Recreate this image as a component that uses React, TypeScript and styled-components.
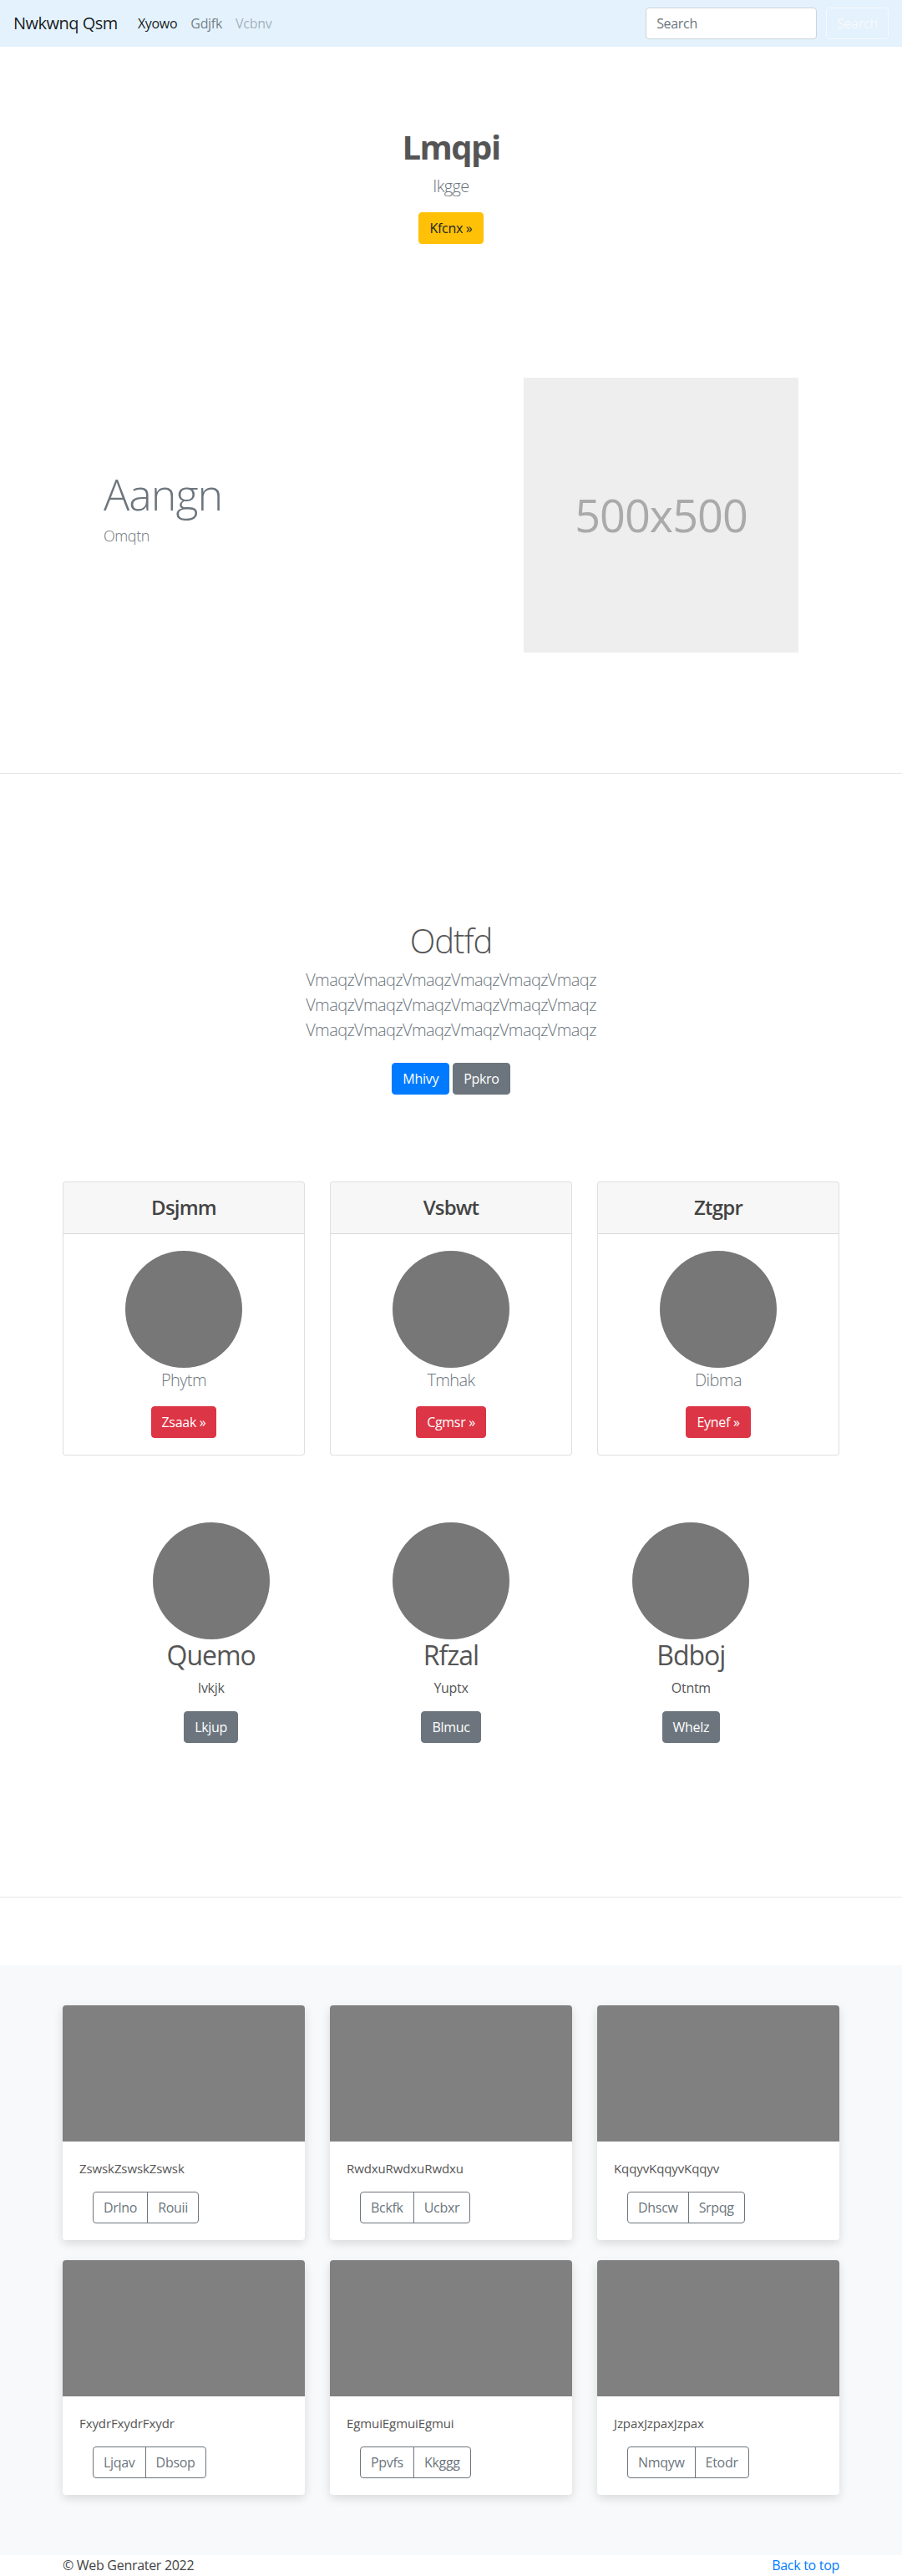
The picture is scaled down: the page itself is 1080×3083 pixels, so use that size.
import React from "react";
import styled, { createGlobalStyle, css } from "styled-components";

const GlobalStyle = createGlobalStyle`
  *, *::before, *::after { box-sizing: border-box; }
  html, body { margin: 0; padding: 0; }
  body {
    font-family: "Open Sans", "Noto Sans", "Liberation Sans", sans-serif;
    font-size: 16px;
    line-height: 1.5;
    letter-spacing: -0.3px;
    color: #555555;
    background: #ffffff;
  }
  h1, h2, h3, h4, p { margin: 0; }
`;

type Variant =
  | "warning"
  | "primary"
  | "secondary"
  | "danger"
  | "outlineSecondary"
  | "outlineLight";

const variants: Record<Variant, ReturnType<typeof css>> = {
  warning: css`background: #ffc107; border-color: #ffc107; color: #212529;`,
  primary: css`background: #007bff; border-color: #007bff; color: #ffffff;`,
  secondary: css`background: #6c757d; border-color: #6c757d; color: #ffffff;`,
  danger: css`background: #dc3545; border-color: #dc3545; color: #ffffff;`,
  outlineSecondary: css`background: transparent; border-color: #6c757d; color: #6c757d;`,
  outlineLight: css`background: transparent; border-color: #f8f9fa; color: #f8f9fa;`,
};

const Button = styled.button<{ $variant: Variant }>`
  display: inline-flex;
  align-items: center;
  justify-content: center;
  height: 38px;
  padding: 0 12px;
  font-family: inherit;
  font-size: 16px;
  font-weight: 400;
  line-height: 1.5;
  letter-spacing: -0.3px;
  border: 1px solid transparent;
  border-radius: 4px;
  cursor: pointer;
  white-space: nowrap;
  ${(p) => variants[p.$variant]}
`;

/* ---------- Navbar ---------- */
const Navbar = styled.nav`
  height: 56px;
  padding: 0 16px;
  display: flex;
  align-items: center;
  background: #e3f2fd;
`;

const Brand = styled.a`
  font-size: 20px;
  line-height: 30px;
  letter-spacing: -0.5px;
  color: rgba(0, 0, 0, 0.9);
  margin-right: 16px;
  text-decoration: none;
`;

const NavList = styled.div`
  display: flex;
  align-items: center;
  flex: 1;
`;

const NavLink = styled.a<{ $state: "active" | "normal" | "disabled" }>`
  padding: 0 8px;
  font-size: 16px;
  line-height: 24px;
  text-decoration: none;
  color: ${(p) =>
    p.$state === "active"
      ? "rgba(0,0,0,0.9)"
      : p.$state === "normal"
      ? "rgba(0,0,0,0.5)"
      : "rgba(0,0,0,0.3)"};
`;

const SearchForm = styled.form`
  display: flex;
  align-items: center;
  gap: 11px;
`;

const SearchInput = styled.input`
  width: 205px;
  height: 38px;
  padding: 6px 12px;
  font-family: inherit;
  font-size: 16px;
  letter-spacing: -0.3px;
  color: #495057;
  background: #ffffff;
  border: 1px solid #ced4da;
  border-radius: 4px;
  outline: none;
  &::placeholder { color: #6c757d; }
`;

/* ---------- Hero ---------- */
const Hero = styled.section`
  padding-top: 96px;
  display: flex;
  flex-direction: column;
  align-items: center;
  text-align: center;
`;

const HeroTitle = styled.h1`
  font-size: 40px;
  line-height: 48px;
  font-weight: 700;
  letter-spacing: -1.5px;
  color: #555555;
  margin-bottom: 8px;
`;

const Lead = styled.p<{ $mb?: number }>`
  font-size: 20px;
  line-height: 30px;
  font-weight: 300;
  letter-spacing: -0.6px;
  color: #6c757d;
  margin-bottom: ${(p) => (p.$mb ?? 16)}px;
`;

/* ---------- Feature ---------- */
const Feature = styled.section`
  padding: 160px 0 144px;
`;

const FeatureInner = styled.div`
  width: 832px;
  margin: 0 auto;
  display: flex;
  align-items: center;
  justify-content: space-between;
`;

const FeatureText = styled.div`
  display: flex;
  flex-direction: column;
`;

const Display = styled.h1`
  font-size: 52px;
  line-height: 64px;
  font-weight: 300;
  letter-spacing: -1px;
  color: #6c757d;
  margin-bottom: 6px;
`;

const FeatureSub = styled.p`
  font-size: 18px;
  line-height: 24px;
  font-weight: 300;
  letter-spacing: -0.4px;
  color: #6c757d;
  margin-bottom: 22px;
`;

const Placeholder = styled.div`
  width: 329px;
  height: 329px;
  background: #eeeeee;
  color: #aaaaaa;
  font-size: 54px;
  letter-spacing: -1px;
  display: flex;
  align-items: center;
  justify-content: center;
`;

const Divider = styled.hr`
  margin: 0;
  border: 0;
  border-top: 1px solid rgba(0, 0, 0, 0.1);
`;

/* ---------- Album jumbotron ---------- */
const Jumbo = styled.section`
  padding-top: 176px;
  display: flex;
  flex-direction: column;
  align-items: center;
  text-align: center;
`;

const JumboTitle = styled.h1`
  font-size: 40px;
  line-height: 48px;
  font-weight: 300;
  letter-spacing: -1px;
  color: #555555;
  margin-bottom: 8px;
`;

const ButtonRow = styled.div`
  display: flex;
  justify-content: center;
  gap: 4px;
  margin-top: 8px;
`;

/* ---------- Pricing cards ---------- */
const Container = styled.div`
  width: 960px;
  margin: 0 auto;
  padding: 0 15px;
`;

const PricingGrid = styled.div`
  margin-top: 104px;
  display: grid;
  grid-template-columns: repeat(3, 1fr);
  column-gap: 30px;
`;

const PricingCard = styled.div`
  border: 1px solid rgba(0, 0, 0, 0.125);
  border-radius: 4px;
  overflow: hidden;
  background: #ffffff;
  display: flex;
  flex-direction: column;
`;

const CardHeader = styled.div`
  padding: 16px 20px;
  background: rgba(0, 0, 0, 0.03);
  border-bottom: 1px solid rgba(0, 0, 0, 0.125);
  text-align: center;
`;

const CardTitle = styled.h4`
  font-size: 24px;
  line-height: 28.8px;
  font-weight: 600;
  letter-spacing: -0.8px;
  color: #444444;
`;

const PricingBody = styled.div`
  padding: 20px;
  display: flex;
  flex-direction: column;
  align-items: center;
  text-align: center;
`;

const Avatar = styled.div`
  width: 140px;
  height: 140px;
  border-radius: 50%;
  background: #777777;
  flex-shrink: 0;
`;

/* ---------- Marketing ---------- */
const MarketingGrid = styled.div`
  width: 862px;
  margin: 80px auto 0;
  display: grid;
  grid-template-columns: repeat(3, 1fr);
`;

const MarketingItem = styled.div`
  display: flex;
  flex-direction: column;
  align-items: center;
  text-align: center;
`;

const MarketingTitle = styled.h2`
  font-size: 32px;
  line-height: 38.4px;
  font-weight: 400;
  letter-spacing: -1px;
  color: #555555;
  margin-bottom: 8px;
`;

const MarketingText = styled.p`
  font-size: 16px;
  line-height: 24px;
  color: #555555;
  margin-bottom: 16px;
`;

const MarketingSpacer = styled.div`
  height: 184px;
`;

/* ---------- Album ---------- */
const AlbumSection = styled.section`
  margin-top: 81px;
  background: #f8f9fa;
  padding: 48px 0;
`;

const AlbumGrid = styled.div`
  display: grid;
  grid-template-columns: repeat(3, 1fr);
  column-gap: 30px;
  row-gap: 24px;
  padding-bottom: 24px;
`;

const AlbumCard = styled.div`
  background: #ffffff;
  border-radius: 4px;
  overflow: hidden;
  box-shadow: 0 4px 12px rgba(0, 0, 0, 0.13);
`;

const Thumb = styled.div`
  height: 163px;
  background: #808080;
`;

const AlbumBody = styled.div`
  padding: 20px;
`;

const CardText = styled.p`
  font-size: 15px;
  line-height: 24px;
  letter-spacing: -0.1px;
  color: #555555;
  margin-bottom: 16px;
`;

const BtnGroup = styled.div`
  display: inline-flex;
  margin-left: 16px;
  & > button { border-radius: 0; }
  & > button:first-child { border-radius: 4px 0 0 4px; }
  & > button:last-child { border-radius: 0 4px 4px 0; margin-left: -1px; }
`;

/* ---------- Footer ---------- */
const Footer = styled.footer`
  width: 930px;
  margin: 0 auto;
  height: 24px;
  display: flex;
  justify-content: space-between;
  align-items: center;
  font-size: 16px;
  line-height: 24px;
  color: #444444;
`;

const TopLink = styled.a`
  color: #007bff;
  text-decoration: none;
`;

const pricing = [
  { title: "Dsjmm", text: "Phytm", btn: "Zsaak »" },
  { title: "Vsbwt", text: "Tmhak", btn: "Cgmsr »" },
  { title: "Ztgpr", text: "Dibma", btn: "Eynef »" },
];

const marketing = [
  { title: "Quemo", text: "Ivkjk", btn: "Lkjup" },
  { title: "Rfzal", text: "Yuptx", btn: "Blmuc" },
  { title: "Bdboj", text: "Otntm", btn: "Whelz" },
];

const album = [
  { text: "ZswskZswskZswsk", a: "Drlno", b: "Rouii" },
  { text: "RwdxuRwdxuRwdxu", a: "Bckfk", b: "Ucbxr" },
  { text: "KqqyvKqqyvKqqyv", a: "Dhscw", b: "Srpqg" },
  { text: "FxydrFxydrFxydr", a: "Ljqav", b: "Dbsop" },
  { text: "EgmuiEgmuiEgmui", a: "Ppvfs", b: "Kkggg" },
  { text: "JzpaxJzpaxJzpax", a: "Nmqyw", b: "Etodr" },
];

export default function App() {
  return (
    <>
      <GlobalStyle />
      <Navbar>
        <Brand href="#">Nwkwnq Qsm</Brand>
        <NavList>
          <NavLink $state="active" href="#">Xyowo</NavLink>
          <NavLink $state="normal" href="#">Gdjfk</NavLink>
          <NavLink $state="disabled" href="#">Vcbnv</NavLink>
        </NavList>
        <SearchForm onSubmit={(e) => e.preventDefault()}>
          <SearchInput placeholder="Search" />
          <Button $variant="outlineLight" type="submit">Search</Button>
        </SearchForm>
      </Navbar>

      <Hero>
        <HeroTitle>Lmqpi</HeroTitle>
        <Lead>Ikgge</Lead>
        <Button $variant="warning">Kfcnx »</Button>
      </Hero>

      <Feature>
        <FeatureInner>
          <FeatureText>
            <Display>Aangn</Display>
            <FeatureSub>Omqtn</FeatureSub>
          </FeatureText>
          <Placeholder>500x500</Placeholder>
        </FeatureInner>
      </Feature>

      <Divider />

      <Jumbo>
        <JumboTitle>Odtfd</JumboTitle>
        <Lead>
          VmaqzVmaqzVmaqzVmaqzVmaqzVmaqz
          <br />
          VmaqzVmaqzVmaqzVmaqzVmaqzVmaqz
          <br />
          VmaqzVmaqzVmaqzVmaqzVmaqzVmaqz
        </Lead>
        <ButtonRow>
          <Button $variant="primary">Mhivy</Button>
          <Button $variant="secondary">Ppkro</Button>
        </ButtonRow>
      </Jumbo>

      <Container>
        <PricingGrid>
          {pricing.map((c) => (
            <PricingCard key={c.title}>
              <CardHeader>
                <CardTitle>{c.title}</CardTitle>
              </CardHeader>
              <PricingBody>
                <Avatar />
                <Lead>{c.text}</Lead>
                <Button $variant="danger">{c.btn}</Button>
              </PricingBody>
            </PricingCard>
          ))}
        </PricingGrid>
      </Container>

      <MarketingGrid>
        {marketing.map((m) => (
          <MarketingItem key={m.title}>
            <Avatar />
            <MarketingTitle>{m.title}</MarketingTitle>
            <MarketingText>{m.text}</MarketingText>
            <Button $variant="secondary">{m.btn}</Button>
          </MarketingItem>
        ))}
      </MarketingGrid>
      <MarketingSpacer />

      <Divider />

      <AlbumSection>
        <Container>
          <AlbumGrid>
            {album.map((a) => (
              <AlbumCard key={a.text}>
                <Thumb />
                <AlbumBody>
                  <CardText>{a.text}</CardText>
                  <BtnGroup>
                    <Button $variant="outlineSecondary">{a.a}</Button>
                    <Button $variant="outlineSecondary">{a.b}</Button>
                  </BtnGroup>
                </AlbumBody>
              </AlbumCard>
            ))}
          </AlbumGrid>
        </Container>
      </AlbumSection>

      <Footer>
        <span>© Web Genrater 2022</span>
        <TopLink href="#">Back to top</TopLink>
      </Footer>
    </>
  );
}
